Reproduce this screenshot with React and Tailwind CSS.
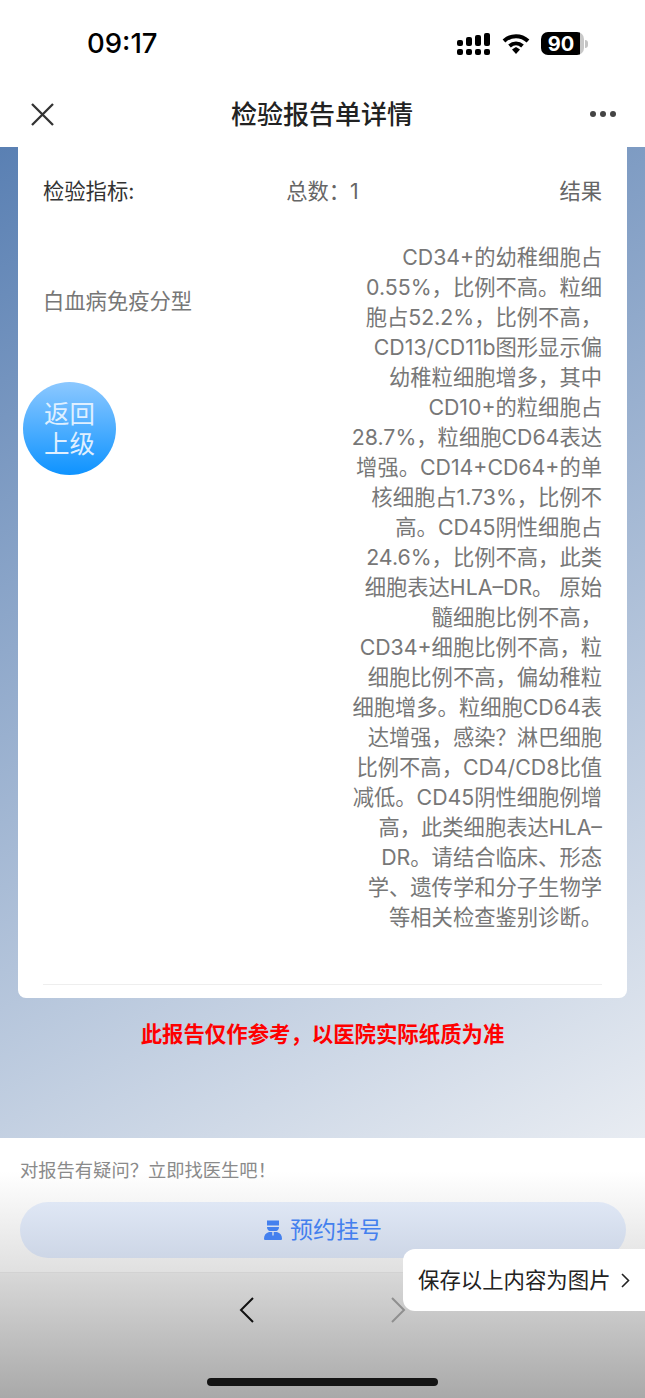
import React from "react";

const RESULT_LINES = [
  "CD34+的幼稚细胞占",
  "0.55%，比例不高。粒细",
  "胞占52.2%，比例不高，",
  "CD13/CD11b图形显示偏",
  "幼稚粒细胞增多，其中",
  "CD10+的粒细胞占",
  "28.7%，粒细胞CD64表达",
  "增强。CD14+CD64+的单",
  "核细胞占1.73%，比例不",
  "高。CD45阴性细胞占",
  "24.6%，比例不高，此类",
  "细胞表达HLA–DR。 原始",
  "髓细胞比例不高，",
  "CD34+细胞比例不高，粒",
  "细胞比例不高，偏幼稚粒",
  "细胞增多。粒细胞CD64表",
  "达增强，感染？淋巴细胞",
  "比例不高，CD4/CD8比值",
  "减低。CD45阴性细胞例增",
  "高，此类细胞表达HLA–",
  "DR。请结合临床、形态",
  "学、遗传学和分子生物学",
  "等相关检查鉴别诊断。",
];

function StatusIcons() {
  return (
    <div className="flex items-center gap-[11px]">
      <svg width="34" height="24" viewBox="0 0 34 24" fill="#000">
        <rect x="0" y="8" width="6" height="6" rx="2" />
        <rect x="0" y="17" width="6" height="6" rx="2" />
        <rect x="9" y="5" width="6" height="9" rx="2" />
        <rect x="9" y="17" width="6" height="6" rx="2" />
        <rect x="18" y="3" width="6" height="11" rx="2" />
        <rect x="18" y="17" width="6" height="6" rx="2" />
        <rect x="27" y="1" width="6" height="13" rx="2" />
        <rect x="27" y="17" width="6" height="6" rx="2" />
      </svg>
      <svg width="28" height="22" viewBox="0 0 28 22" fill="none" stroke="#000" strokeWidth="4">
        <path d="M2 8c7-6.500 17-6.500 24 0" />
        <path d="M7.500 13c4-3.500 9-3.500 13 0" />
        <path d="M10 16.500l4-2.500 4 2.500-4 4.500z" fill="#000" stroke="none" />
      </svg>
      <div className="flex items-center">
        <div className="flex h-[23px] w-[43px] items-center justify-center rounded-[7px] bg-[linear-gradient(90deg,#000_90%,#c8c8c8_90%)] pr-[3px] font-['Inter',sans-serif] text-[20px] font-bold text-white">
          90
        </div>
        <div className="ml-[1px] h-[8px] w-[3px] rounded-r-full bg-[#c4c4c4]" />
      </div>
    </div>
  );
}

export default function App() {
  return (
    <div className="relative flex h-[1398px] w-[645px] flex-col overflow-hidden bg-white font-['Inter','Noto_Sans_CJK_SC',sans-serif]">
      <div className="h-[147px] shrink-0 bg-white">
        <div className="flex h-[87px] items-center justify-between pl-[87px] pr-[57px]">
          <span className="text-[27.500px] font-medium text-black">09:17</span>
          <StatusIcons />
        </div>
        <div className="flex h-[54px] items-center justify-between pl-[31px] pr-[29px]">
          <svg width="23" height="23" viewBox="0 0 23 23" stroke="#333" strokeWidth="2.300" fill="none">
            <path d="M1 1l21 21M22 1L1 22" />
          </svg>
          <span className="text-[26px] font-medium text-[#222]">检验报告单详情</span>
          <div className="flex gap-[4px]">
            <span className="h-[6px] w-[6px] rounded-full bg-[#444]" />
            <span className="h-[6px] w-[6px] rounded-full bg-[#444]" />
            <span className="h-[6px] w-[6px] rounded-full bg-[#444]" />
          </div>
        </div>
      </div>

      <div className="h-[991px] shrink-0 bg-[linear-gradient(152deg,#5a80b3,#e8ecf2)] px-[18px]">
        <div className="rounded-b-[8px] bg-white px-[25px] pb-[13px]">
          <div className="grid h-[90px] grid-cols-3 items-center pb-[1px] text-[21.300px]">
            <span className="text-[#333]">检验指标:</span>
            <span className="text-center text-[#666]">总数：1</span>
            <span className="text-right text-[#666]">结果</span>
          </div>
          <div className="flex justify-between pt-[5px] pb-[52px]">
            <span className="pt-[44px] text-[21.300px] leading-[30px] text-[#777]">白血病免疫分型</span>
            <div className="text-right text-[21.300px] leading-[30px] text-[#777]">
              {RESULT_LINES.map((line) => (
                <div key={line} className="whitespace-nowrap">
                  {line}
                </div>
              ))}
            </div>
          </div>
          <div className="h-px bg-[#eeeeee]" />
        </div>
        <p className="pt-[21px] text-center text-[21.400px] font-bold leading-[30px] text-[#ff0000]">
          此报告仅作参考，以医院实际纸质为准
        </p>
      </div>

      <div className="h-[135px] shrink-0 border-b border-[#d2d2d2] bg-[linear-gradient(180deg,#ffffff_0%,#ffffff_25%,#e0e0e0_100%)] px-[20px]">
        <p className="pt-[19px] text-[18.300px] leading-[27px] text-[#8a8a8a]">对报告有疑问？立即找医生吧！</p>
        <div className="mt-[18px] flex h-[56px] w-[606px] items-center justify-center gap-[8px] rounded-[28px] bg-[linear-gradient(180deg,#dfe7f5_0%,#cdd6e6_100%)]">
          <svg width="18" height="22" viewBox="0 0 18 22" fill="#4480ee">
            <path d="M3 1.500h12v5H3zM3 8h12c0 2-1 3.500-2.500 4h-7C4 11.500 3 10 3 8z" />
            <path d="M1.500 21c-1 0-1.500-.5-1.500-1.500C0 16 2 14 5 13h3.300v3.500h1.400V13H13c3 1 5 3 5 6.500 0 1-.5 1.500-1.500 1.500z" />
          </svg>
          <span className="text-[23px] text-[#4480ee]">预约挂号</span>
        </div>
      </div>

      <div className="relative flex-1 bg-[linear-gradient(180deg,#d8d8d8_0%,#a9a9a9_100%)]">
        <div className="flex justify-center gap-[135px] pt-[22px]">
          <svg width="16" height="30" viewBox="0 0 16 30" fill="none" stroke="#111" strokeWidth="2">
            <path d="M14 3L2 15l12 12" />
          </svg>
          <svg width="16" height="30" viewBox="0 0 16 30" fill="none" stroke="#8f8f8f" strokeWidth="2">
            <path d="M2 3l12 12L2 27" />
          </svg>
        </div>
        <div className="mx-auto mt-[53px] h-[8px] w-[231px] rounded-full bg-[#141414]" />
      </div>

      <div className="absolute left-[23px] top-[382px] flex h-[93px] w-[93px] flex-col items-center justify-center rounded-full bg-[linear-gradient(180deg,#8cc8ff_0%,#0e93ff_100%)] text-[25.500px] leading-[30px] text-[#dfefff]">
        <span>返回</span>
        <span>上级</span>
      </div>

      <div className="absolute right-0 top-[1249px] flex h-[62px] w-[242px] items-center gap-[10px] rounded-l-[12px] bg-white pl-[15px]">
        <span className="whitespace-nowrap text-[21.400px] text-[#222]">保存以上内容为图片</span>
        <svg width="9" height="15" viewBox="0 0 9 15" fill="none" stroke="#222" strokeWidth="1.600">
          <path d="M1 1l6.500 6.500L1 14" />
        </svg>
      </div>
    </div>
  );
}
